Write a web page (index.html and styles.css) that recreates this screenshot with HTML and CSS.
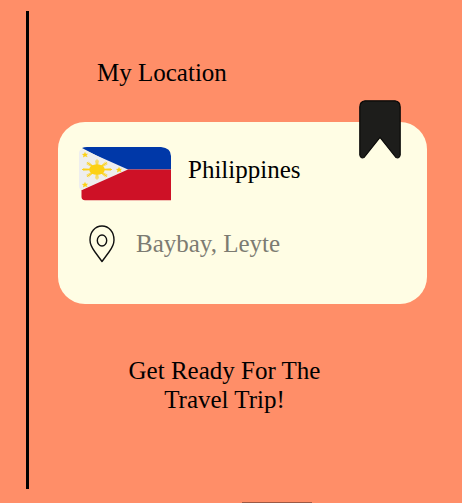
FILE: index.html
```html
<!DOCTYPE html>
<html lang="en">
<head>
<meta charset="utf-8">
<meta name="viewport" content="width=device-width, initial-scale=1">
<title>My Location</title>
<link rel="stylesheet" href="styles.css">
</head>
<body>
<main class="page">
  <section class="panel">
    <h1 class="title">My Location</h1>
    <article class="card">
      <svg class="bookmark" viewBox="0 0 42 59" aria-hidden="true">
        <path d="M6 .8H36Q41.2 1.5 41.2 7V55Q40.500 58.800 37 57.500L21 37.500L5 57.500Q1.500 58.800 .8 55V7Q.8 1.500 6 .8Z" fill="#1d1d1b" stroke="#080807" stroke-width="1.200"/>
      </svg>
      <div class="row">
        <svg class="flag" viewBox="0 0 92 54" role="img" aria-label="Flag of the Philippines">
          <path d="M3 1Q5 0 8 0H82Q92 1 92 9V22.500H44Z" fill="#0038a8"/>
          <path d="M44 22.500H92V53.300H6Q2.500 53 2.500 50V43Z" fill="#ce1126"/>
          <path d="M3 2L49 22.500L3 43Q0 42 0 39V6Q0 3 3 2Z" fill="#eee"/>
          <g fill="#fcd116">
            <ellipse cx="18" cy="22.500" rx="7.800" ry="5.300"/>
            <g stroke="#fcd116" stroke-width="1.100">
              <path d="M18 12.500V32.500M3 22.500H33M8 15.500L28 29.500M8 29.500L28 15.500"/>
            </g>
            <g stroke="#fcd116" stroke-width=".6">
              <path d="M16.500 13.500L19.500 31.500M19.500 13.500L16.500 31.500M4 21.500L32 23.500M4 23.500L32 21.500M7.500 17L28.500 28M9.500 15L26.500 30M7.500 28L28.500 17M9.500 30L26.500 15"/>
            </g>
            <path id="star" d="M6 4.800L6.900 6.800L9.200 6.700L7.500 8.200L8.700 10.200L6.200 9.200L4 10.500L4.500 8.300L2.800 7L5.100 6.800Z"/>
            <use href="#star" y="30"/>
            <use href="#star" x="34" y="15"/>
          </g>
        </svg>
        <h2 class="country">Philippines</h2>
      </div>
      <div class="row">
        <svg class="pin" viewBox="0 0 26 38" fill="none" stroke="#111" stroke-width="1.400" stroke-linejoin="round" aria-hidden="true">
          <path d="M13 1C6 1 1 7 1 15C1 20 3 23 6 27L13 36.500L20 27C23 23 25 20 25 15C25 7 20 1 13 1Z"/>
          <ellipse cx="13" cy="15.500" rx="4.700" ry="5.500"/>
        </svg>
        <p class="place">Baybay, Leyte</p>
      </div>
    </article>
    <p class="message">Get Ready For The<br>Travel Trip!</p>
  </section>
  <div class="handle"></div>
</main>
</body>
</html>
```
FILE: styles.css
```css
* {
  box-sizing: border-box;
}

body {
  margin: 0;
  background: #ff8e68;
  color: #000;
  font: 24px/28px "Liberation Serif", serif;
}

.page {
  display: flex;
  flex-direction: column;
  min-height: 100vh;
  padding: 11px 35px 0 26px;
}

.panel {
  padding: 48px 0 75px 29px;
  border-left: 3px solid #000;
}

.title,
.country,
.place,
.message {
  margin: 0;
  font-size: 25px;
  font-weight: 400;
}

.title {
  margin: 0 0 35px 39px;
}

.card {
  position: relative;
  display: flex;
  flex-direction: column;
  gap: 24px;
  min-height: 182px;
  padding: 25px 21px;
  border-radius: 27px;
  background: #fffde4;
}

.bookmark {
  position: absolute;
  top: -22px;
  right: 26px;
  width: 42px;
}

.row {
  display: flex;
  align-items: center;
}

.flag {
  width: 92px;
  height: 54px;
  margin-right: 17px;
}

.country {
  padding-bottom: 8px;
}

.pin {
  width: 26px;
  height: 38px;
  margin: 0 21px 0 10px;
}

.place {
  color: #7c7b72;
}

.message {
  margin: 52px 36px 0 0;
  line-height: 29px;
  text-align: center;
}

.handle {
  width: 70px;
  height: 1px;
  margin: auto 0 0 216px;
  background: #9c5944;
}
```
